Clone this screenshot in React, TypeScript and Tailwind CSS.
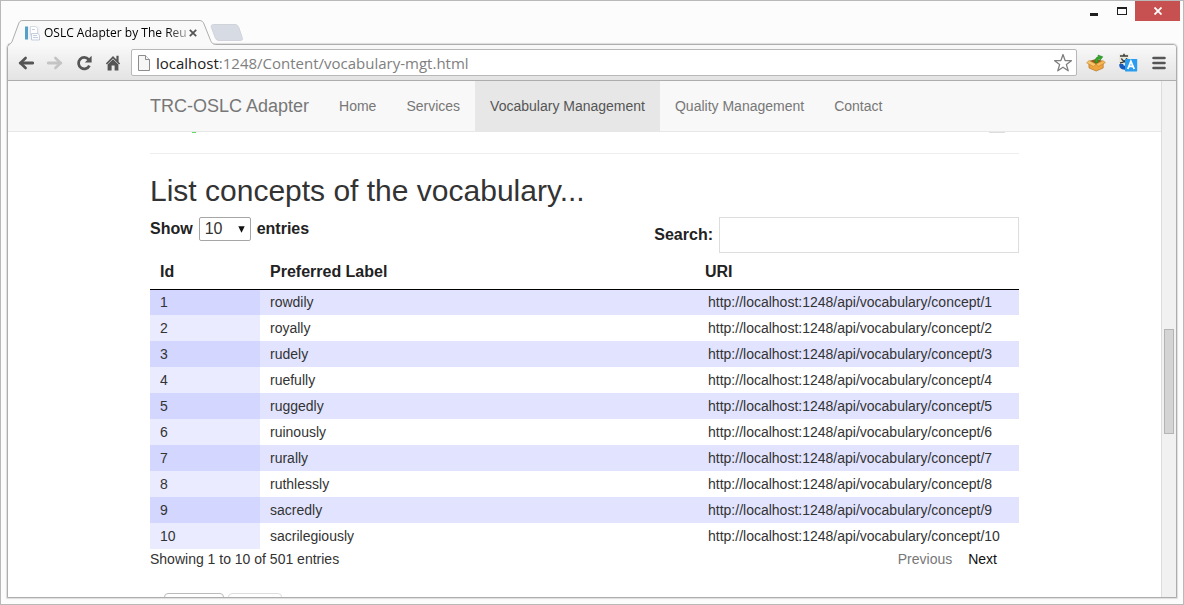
import { useState } from "react";

type Concept = {
  id: number;
  label: string;
};

const API_URL = "http://localhost:1248/api/vocabulary/concept/";

const navItems = [
  "Home",
  "Services",
  "Vocabulary Management",
  "Quality Management",
  "Contact",
];

const concepts: Concept[] = [
  { id: 1, label: "rowdily" },
  { id: 2, label: "royally" },
  { id: 3, label: "rudely" },
  { id: 4, label: "ruefully" },
  { id: 5, label: "ruggedly" },
  { id: 6, label: "ruinously" },
  { id: 7, label: "rurally" },
  { id: 8, label: "ruthlessly" },
  { id: 9, label: "sacredly" },
  { id: 10, label: "sacrilegiously" },
];

const BackIcon = ({ color }: { color: string }) => (
  <svg width="16" height="16" viewBox="0 0 16 16" fill="none" stroke={color} strokeWidth="3">
    <path d="M2.5 8H14.6" strokeLinecap="round" />
    <path d="M7.6 3L2.4 8L7.6 13" strokeWidth="2.6" strokeLinecap="round" />
  </svg>
);

const ReloadIcon = () => (
  <svg width="16" height="16" viewBox="0 0 16 16" fill="none">
    <path d="M12.6 4.4A5.7 5.7 0 1 0 13.4 10.6" stroke="#555" strokeWidth="2.8" />
    <path d="M15.6 .8V7.4H8.8Z" fill="#555" />
  </svg>
);

const HomeIcon = () => (
  <svg width="16" height="16" viewBox="0 0 16 16" fill="#555">
    <path d="M8 1L0.8 8.6L2 9.6L8 3.6L14 9.6L15.2 8.6L13.6 6.9V0.8H11.4V4.6Z" />
    <path d="M8 4.2L2.6 9.4V15.6H6.6V10.6H9.6V15.6H13.4V9.4Z" />
  </svg>
);

const PageIcon = () => (
  <svg width="12" height="16" viewBox="0 0 12 16" fill="#f6f6f6" stroke="#8c8c8c">
    <path d="M.5 .5H7.5L11.5 4.5V15.5H.5Z" />
    <path d="M7.5 .5V4.5H11.5" />
  </svg>
);

const StarIcon = () => (
  <svg width="20" height="20" viewBox="0 0 20 20" fill="#fff" stroke="#808080" strokeWidth="1.3" strokeLinejoin="round">
    <path d="M10 1.5L12.1 7.5L18.4 7.7L13.4 11.6L15.2 17.8L10 14.2L4.8 17.8L6.6 11.6L1.6 7.7L7.9 7.5Z" />
  </svg>
);

const BoxIcon = () => (
  <svg width="20" height="18" viewBox="0 0 20 18">
    <path d="M2.8 8L10 10.3L17.2 8V14L10.2 17L3 14Z" fill="#efa53c" stroke="#b87424" strokeWidth=".7" />
    <path d="M3 7L10 5L17 7L10 10.2Z" fill="#9b5c18" />
    <path d="M3 6.6L10 10L7.6 12.6L.6 8.8Z" fill="#fbc76c" stroke="#c5822c" strokeWidth=".6" />
    <path d="M17 6.6L10 10L12.4 12.6L19.4 8.6Z" fill="#f8b855" stroke="#c5822c" strokeWidth=".6" />
    <path d="M9.2 9C8.6 5.4 10 3.2 12.4 2.4L12 1L16.8 2.8L14 6.4L13.4 4.8C11.8 5.2 11.6 6.8 11.8 8.4Z" fill="#35a52b" stroke="#1f7a1d" strokeWidth=".5" />
  </svg>
);

const TranslateIcon = () => (
  <svg width="20" height="19" viewBox="0 0 20 19">
    <path d="M1 1H11V10H1Z" fill="#ebe8dc" />
    <path d="M2 3H10M6 .8V3M3.4 5.4C4 7.4 7 9 9.4 10M8.8 5.2C8 7.6 5 9.4 2 10" fill="none" stroke="#3b3b3b" strokeWidth="1.5" />
    <path d="M1.4 11C.6 14.6 3.4 17 7.4 16.6V12.6C5.8 13 5.2 12 5.2 11Z" fill="#1759ba" />
    <rect x="7" y="6" width="12.2" height="12.4" rx=".6" fill="#2a9df0" />
    <path d="M9.8 16L12.9 8.4L16.2 16M11 13.4H15" fill="none" stroke="#fff" strokeWidth="1.8" />
  </svg>
);

const Favicon = () => (
  <svg width="16" height="16" viewBox="0 0 16 16">
    <path d="M1 1.5H15.5V14.5H1Z" fill="#eef1f5" />
    <path d="M1 1.5H4V14.5H1Z" fill="#55a0c8" />
    <path d="M6.5 1.5H12L13.5 3.5V10H6.5Z" fill="#fff" stroke="#ccd3df" strokeWidth=".8" />
    <path d="M7.5 8.5H14L15.5 10.5V15H7.5Z" fill="#fafbfd" stroke="#b9c3d4" strokeWidth=".8" />
    <path d="M9 10.5H13M9 12.5H14M8 4.5H11" stroke="#c3cddd" />
  </svg>
);

const TitleBar = () => (
  <header className="relative z-10 -mb-px flex h-11 items-start justify-between pl-[7px] pr-[3px]">
    <div className="flex pt-[19px]">
      <div className="relative flex h-[25px] w-[210px] items-center pl-4">
        <svg className="absolute left-0 top-0" width="210" height="25" viewBox="0 0 210 25">
          <path d="M0 24.5C3 24.5 4 22 5 19L10.5 4C11.5 1.5 12 .5 15 .5H191C194 .5 195 1.5 196 4L202 19C203.5 23 204.5 24.5 209 24.5V25H0Z" fill="#f9f9f9" />
          <path d="M0 24.5C3 24.5 4 22 5 19L10.5 4C11.5 1.5 12 .5 15 .5H191C194 .5 195 1.5 196 4L202 19C203.5 23 204.5 24.5 209 24.5" fill="none" stroke="#adadad" />
        </svg>
        <div className="relative flex items-center">
          <Favicon />
          <span className="ml-1 w-36 whitespace-nowrap bg-linear-to-r from-black from-85% to-black/30 bg-clip-text text-xs text-transparent">
            OSLC Adapter by The Reu
          </span>
          <button aria-label="Close tab" className="ml-px flex w-2 justify-center">
            <svg width="8" height="8" viewBox="0 0 8 8" stroke="#555" strokeWidth="1.8">
              <path d="M.8 .8L7.2 7.2M7.2 .8L.8 7.2" />
            </svg>
          </button>
        </div>
      </div>
      <button aria-label="New tab" className="-ml-2 mt-1 h-[18px]">
        <svg width="34" height="18" viewBox="0 0 34 18">
          <path d="M3.5 .5H25C27 .5 28 1.5 28.8 3.5L32.2 13.5C32.8 15.5 32.2 16.5 30.6 16.5H9C7 16.5 6 15.5 5.2 13.5L1.4 3.5C.8 1.5 1.5 .5 3.5 .5Z" fill="#d7dce4" stroke="#d0d4da" />
        </svg>
      </button>
    </div>
    <div className="flex h-5">
      <button aria-label="Minimize" className="flex w-7 justify-center pt-3">
        <svg width="8" height="3" viewBox="0 0 8 3">
          <rect width="8" height="3" fill="#1f1f1f" />
        </svg>
      </button>
      <button aria-label="Maximize" className="flex w-[27px] justify-center pt-1.5">
        <svg width="10" height="8" viewBox="0 0 10 8">
          <path d="M0 0H10V8H0ZM1 2V7H9V2Z" fill="#1f1f1f" fillRule="evenodd" />
        </svg>
      </button>
      <button aria-label="Close" className="flex w-[45px] items-center justify-center bg-[#c75050]">
        <svg width="8" height="8" viewBox="0 0 8 8" stroke="#fff" strokeWidth="1.8">
          <path d="M.5 .5L7.5 7.5M7.5 .5L.5 7.5" />
        </svg>
      </button>
    </div>
  </header>
);

const Toolbar = () => (
  <div className="flex h-9 shrink-0 items-center border-b border-[#adadad] bg-linear-to-b from-[#f9f9f9] to-[#e3e3e3] pl-2.5 pr-2">
    <div className="flex gap-[13px] pr-2.5">
      <button aria-label="Back">
        <BackIcon color="#555" />
      </button>
      <button aria-label="Forward" className="-scale-x-100">
        <BackIcon color="#c4c4c4" />
      </button>
      <button aria-label="Reload">
        <ReloadIcon />
      </button>
      <button aria-label="Home">
        <HomeIcon />
      </button>
    </div>
    <div className="flex h-[27px] flex-1 items-center rounded-xs border border-[#b8b8b8] bg-white pl-1.5 pr-[3px]">
      <PageIcon />
      <span className="ml-1.5 flex-1 text-[15px] leading-5 text-[#808080]">
        <span className="text-[#222]">localhost</span>:1248/Content/vocabulary-mgt.html
      </span>
      <button aria-label="Bookmark this page">
        <StarIcon />
      </button>
    </div>
    <button aria-label="Package extension" className="ml-[9px]">
      <BoxIcon />
    </button>
    <button aria-label="Translate" className="ml-3">
      <TranslateIcon />
    </button>
    <button aria-label="Menu" className="ml-3.5 w-4">
      <svg width="14" height="14" viewBox="0 0 14 14" stroke="#555" strokeWidth="2.6" strokeLinecap="round">
        <path d="M1.5 2H12.5M1.5 7H12.5M1.5 12H12.5" />
      </svg>
    </button>
  </div>
);

const Navbar = () => (
  <nav className="h-[51px] shrink-0 border-b border-[#e7e7e7] bg-[#f8f8f8]">
    <div className="mx-auto flex h-full max-w-[869px] items-stretch">
      <a href="#" className="mr-[15px] flex items-center text-lg text-[#777]">
        TRC-OSLC Adapter
      </a>
      {navItems.map((item) => (
        <a
          key={item}
          href="#"
          className={
            item === "Vocabulary Management"
              ? "flex items-center bg-[#e7e7e7] px-[15px] text-sm text-[#555]"
              : "flex items-center px-[15px] text-sm text-[#777]"
          }
        >
          {item}
        </a>
      ))}
    </div>
  </nav>
);

const ConceptTable = () => (
  <table className="mt-[3px] w-full table-fixed border-collapse text-left text-sm text-[#333]">
    <thead>
      <tr className="h-[33px] border-b border-black text-base text-[#222]">
        <th className="w-[110px] px-2.5 py-0 font-bold">Id</th>
        <th className="px-2.5 py-0 font-bold">Preferred Label</th>
        <th className="w-[322px] px-2 py-0 font-bold">URI</th>
      </tr>
    </thead>
    <tbody>
      {concepts.map((concept) => (
        <tr key={concept.id} className="group h-[26px] odd:bg-[#e2e4ff]">
          <td className="bg-[#eaebff] px-2.5 py-0 group-odd:bg-[#d3d6ff]">{concept.id}</td>
          <td className="px-2.5 py-0">{concept.label}</td>
          <td className="px-[11px] py-0">{API_URL + concept.id}</td>
        </tr>
      ))}
    </tbody>
  </table>
);

const Vocabulary = () => {
  const [pageSize, setPageSize] = useState("10");
  const [search, setSearch] = useState("");

  return (
    <main className="mx-auto w-full max-w-[869px] text-[#333]">
      {/* lower edge of the section scrolled under the navbar */}
      <div className="flex h-[22px] items-start justify-between border-b border-[#eee] pl-[42px] pr-3.5">
        <span className="h-px w-1 bg-[#5fdc5f]" />
        <span className="h-px w-4 bg-[#ddd]" />
      </div>
      <h2 className="mt-5 text-[30px] leading-[34px]">List concepts of the vocabulary...</h2>
      <div className="mt-[9px] flex items-start justify-between text-base font-bold text-[#222]">
        <label className="flex h-6 items-center gap-1.5">
          Show
          <span className="relative">
            <select
              value={pageSize}
              onChange={(e) => setPageSize(e.target.value)}
              className="block h-6 w-[52px] appearance-none rounded-xs border border-[#a6a6a6] bg-white pl-[5px] text-base font-normal leading-5 text-[#333]"
            >
              <option>10</option>
              <option>25</option>
              <option>50</option>
              <option>100</option>
            </select>
            <svg className="pointer-events-none absolute right-1.5 top-[9px]" width="7" height="7" viewBox="0 0 7 7">
              <path d="M.3 .3H6.7L3.5 6.7Z" fill="#111" />
            </svg>
          </span>
          entries
        </label>
        <label className="flex items-center gap-1.5">
          Search:
          <input
            type="text"
            value={search}
            onChange={(e) => setSearch(e.target.value)}
            className="h-9 w-[300px] border border-[#ddd] bg-white px-2 font-normal outline-none"
          />
        </label>
      </div>
      <ConceptTable />
      <div className="flex justify-between text-sm">
        <p>Showing 1 to 10 of 501 entries</p>
        <div className="flex gap-4 pr-[22px]">
          <button className="text-[#777]" disabled>
            Previous
          </button>
          <button className="text-[#111]">Next</button>
        </div>
      </div>
      <div className="mt-6 flex gap-1 pl-3.5">
        <button aria-label="Add concept" className="h-8 w-[60px] rounded border border-[#bbb]" />
        <button aria-label="Cancel" className="h-8 w-[54px] rounded border border-[#ddd]" />
      </div>
    </main>
  );
};

const Scrollbar = () => (
  <div className="flex w-[15px] shrink-0 flex-col border-l border-[#dcdcdc] bg-[#f1f1f1] px-0.5">
    <div className="flex-[249]" />
    <div className="flex-[103] border border-[#b4b4b4] bg-[#d4d4d4]" />
    <div className="flex-[164]" />
  </div>
);

const App = () => {
  return (
    <div className="flex h-screen flex-col border border-[#b9b9b9] bg-[#fcfcfc] font-['Open_Sans',sans-serif]">
      <TitleBar />
      <div className="mx-1.5 mb-1.5 flex min-h-0 flex-1 flex-col overflow-hidden rounded-t border border-[#adadad] bg-white shadow-[0_0_1px_1px_#dedede]">
        <Toolbar />
        <div className="flex min-h-0 flex-1 font-['Liberation_Sans',Arial,sans-serif]">
          <div className="flex min-w-0 flex-1 flex-col overflow-hidden">
            <Navbar />
            <Vocabulary />
          </div>
          <Scrollbar />
        </div>
      </div>
    </div>
  );
};

export default App;
